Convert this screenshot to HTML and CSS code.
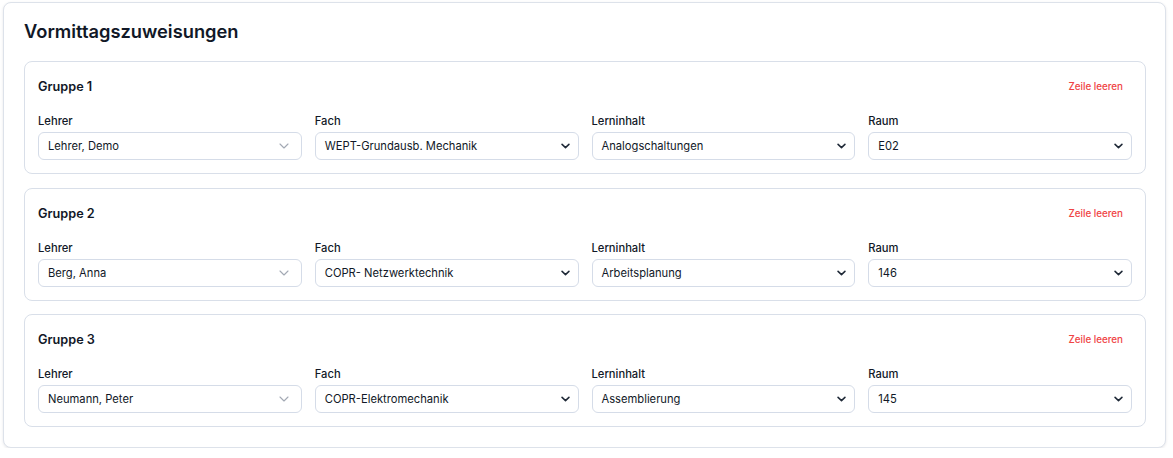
FILE: index.html
```html
<!DOCTYPE html>
<html lang="de">
<head>
<meta charset="utf-8">
<title>Vormittagszuweisungen</title>
<link rel="stylesheet" href="styles.css">
</head>
<body>
<section class="panel">
  <h2 class="panel-title">Vormittagszuweisungen</h2>
  <div class="groups">
    <div class="group">
      <div class="group-head"><h3>Gruppe 1</h3><button class="clear">Zeile leeren</button></div>
      <div class="fields">
        <div class="field"><label>Lehrer</label><div class="select soft"><span>Lehrer, Demo</span><svg class="chev-soft" viewBox="0 0 10 6"><path d="M1 1l4 4 4-4"/></svg></div></div>
        <div class="field"><label>Fach</label><div class="select"><span>WEPT-Grundausb. Mechanik</span><svg class="chev" viewBox="0 0 10 6"><path d="M1.2 1.2l3.8 3.6 3.8-3.6"/></svg></div></div>
        <div class="field"><label>Lerninhalt</label><div class="select"><span>Analogschaltungen</span><svg class="chev" viewBox="0 0 10 6"><path d="M1.2 1.2l3.8 3.6 3.8-3.6"/></svg></div></div>
        <div class="field"><label>Raum</label><div class="select"><span>E02</span><svg class="chev" viewBox="0 0 10 6"><path d="M1.2 1.2l3.8 3.6 3.8-3.6"/></svg></div></div>
      </div>
    </div>
    <div class="group">
      <div class="group-head"><h3>Gruppe 2</h3><button class="clear">Zeile leeren</button></div>
      <div class="fields">
        <div class="field"><label>Lehrer</label><div class="select soft"><span>Berg, Anna</span><svg class="chev-soft" viewBox="0 0 10 6"><path d="M1 1l4 4 4-4"/></svg></div></div>
        <div class="field"><label>Fach</label><div class="select"><span>COPR- Netzwerktechnik</span><svg class="chev" viewBox="0 0 10 6"><path d="M1.2 1.2l3.8 3.6 3.8-3.6"/></svg></div></div>
        <div class="field"><label>Lerninhalt</label><div class="select"><span>Arbeitsplanung</span><svg class="chev" viewBox="0 0 10 6"><path d="M1.2 1.2l3.8 3.6 3.8-3.6"/></svg></div></div>
        <div class="field"><label>Raum</label><div class="select"><span>146</span><svg class="chev" viewBox="0 0 10 6"><path d="M1.2 1.2l3.8 3.6 3.8-3.6"/></svg></div></div>
      </div>
    </div>
    <div class="group">
      <div class="group-head"><h3>Gruppe 3</h3><button class="clear">Zeile leeren</button></div>
      <div class="fields">
        <div class="field"><label>Lehrer</label><div class="select soft"><span>Neumann, Peter</span><svg class="chev-soft" viewBox="0 0 10 6"><path d="M1 1l4 4 4-4"/></svg></div></div>
        <div class="field"><label>Fach</label><div class="select"><span>COPR-Elektromechanik</span><svg class="chev" viewBox="0 0 10 6"><path d="M1.2 1.2l3.8 3.6 3.8-3.6"/></svg></div></div>
        <div class="field"><label>Lerninhalt</label><div class="select"><span>Assemblierung</span><svg class="chev" viewBox="0 0 10 6"><path d="M1.2 1.2l3.8 3.6 3.8-3.6"/></svg></div></div>
        <div class="field"><label>Raum</label><div class="select"><span>145</span><svg class="chev" viewBox="0 0 10 6"><path d="M1.2 1.2l3.8 3.6 3.8-3.6"/></svg></div></div>
      </div>
    </div>
  </div>
</section>
</body>
</html>
```

FILE: styles.css
```css
* { box-sizing: border-box; }
html, body { margin: 0; padding: 0; background: #ffffff; }
body {
  font-family: Inter, "Noto Sans", "Liberation Sans", sans-serif;
  color: #111827;
  padding: 2px 7px 0 3px;
}
.panel {
  width: 1163px;
  background: #ffffff;
  border: 1px solid #dde2ea;
  border-radius: 8px;
  box-shadow: 0 1px 3px rgba(15, 23, 42, 0.10);
  padding: 14px 19px 20px 20px;
}
.panel-title {
  margin: 0 0 16px 0;
  font-size: 18.3px;
  line-height: 28px;
  font-weight: 600;
  color: #111827;
}
.groups {
  display: flex;
  flex-direction: column;
  gap: 13.5px;
}
.group {
  border: 1px solid #d9dfe9;
  border-radius: 8px;
  padding: 13px;
  background: #ffffff;
}
.group-head {
  display: flex;
  align-items: center;
  justify-content: space-between;
  height: 24px;
  margin-bottom: 14px;
}
.group-head h3 {
  margin: 0;
  font-size: 12.7px;
  line-height: 20px;
  font-weight: 600;
  color: #111827;
}
.clear {
  border: 0;
  background: transparent;
  font-family: inherit;
  font-size: 9.8px;
  font-weight: 500;
  color: #ef4444;
  padding: 4px 9px;
  line-height: 16px;
  cursor: pointer;
}
.fields {
  display: grid;
  grid-template-columns: repeat(4, 1fr);
  gap: 13px;
}
.field label {
  display: block;
  font-size: 11.2px;
  line-height: 16px;
  font-weight: 500;
  color: #111827;
  margin-bottom: 3px;
}
.select {
  height: 28px;
  border: 1px solid #d5dce8;
  border-radius: 6px;
  background: #ffffff;
  display: flex;
  align-items: center;
  justify-content: space-between;
  padding: 0 8px 0 9px;
  font-size: 11.2px;
  color: #111827;
}
.select.soft { padding-right: 12px; }
.chev {
  width: 9px;
  height: 6px;
  fill: none;
  stroke: #1f2937;
  stroke-width: 1.7;
  stroke-linecap: round;
  stroke-linejoin: round;
}
.chev-soft {
  width: 10px;
  height: 6px;
  fill: none;
  stroke: #a3a9b4;
  stroke-width: 1.1;
  stroke-linecap: round;
  stroke-linejoin: round;
}
```
